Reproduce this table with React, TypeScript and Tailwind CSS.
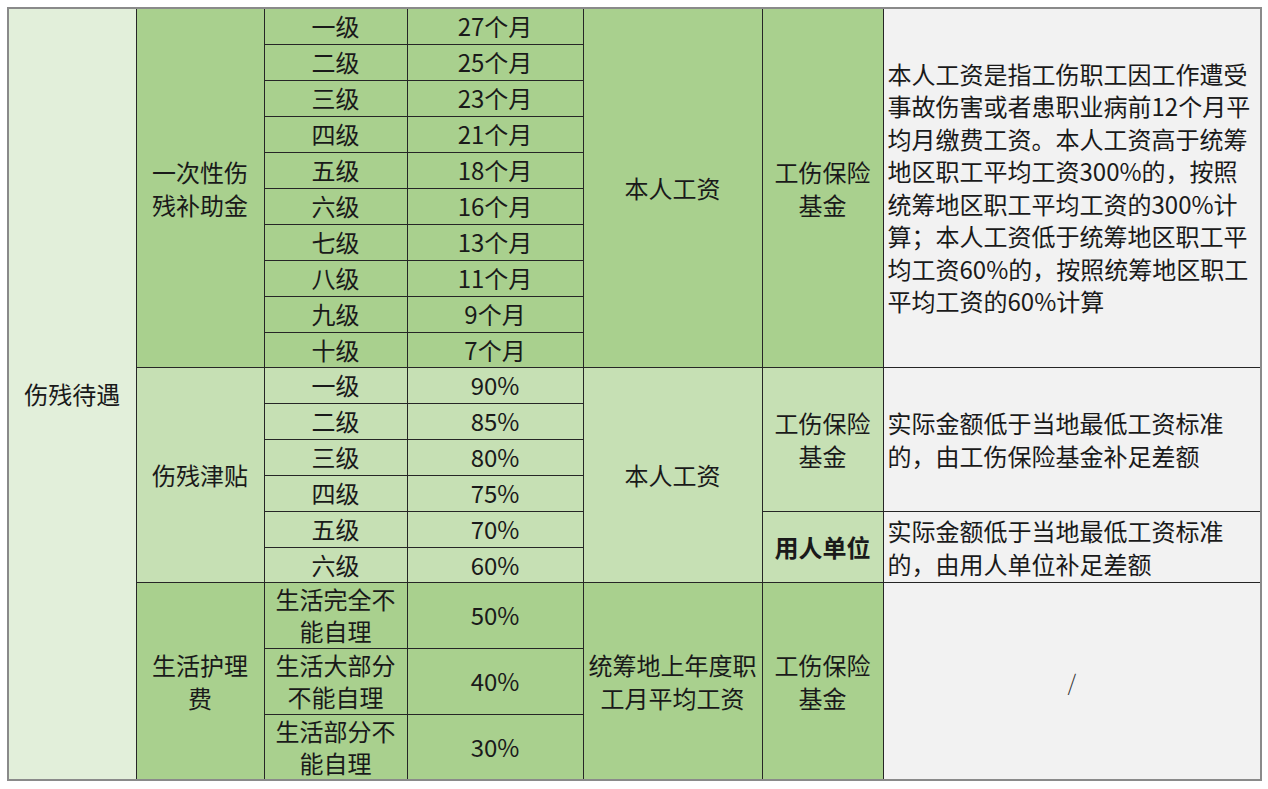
import React from 'react';

const dark = 'bg-[#a9d08e]';
const light = 'bg-[#c6e0b4]';
const cell = 'border border-[#262626] text-center align-middle p-0';
const note = 'border border-[#262626] bg-[#f2f2f2] text-left align-middle py-0 pl-[4px] pr-1';

const lumpSum = [
  ['一级', '27个月'],
  ['二级', '25个月'],
  ['三级', '23个月'],
  ['四级', '21个月'],
  ['五级', '18个月'],
  ['六级', '16个月'],
  ['七级', '13个月'],
  ['八级', '11个月'],
  ['九级', '9个月'],
  ['十级', '7个月'],
];

const allowance = [
  ['一级', '90%'],
  ['二级', '85%'],
  ['三级', '80%'],
  ['四级', '75%'],
  ['五级', '70%'],
  ['六级', '60%'],
];

const App: React.FC = () => {
  return (
    <div className="min-h-screen bg-white pl-[7px] pt-[7px] font-['Noto_Sans_CJK_SC',sans-serif] text-[24px] leading-[32px] text-[#1a1a1a]">
      <table className="table-fixed border-collapse border-2 border-[#8a8a8a] w-[1253px]">
        <colgroup>
          <col className="w-[128px]" />
          <col className="w-[128px]" />
          <col className="w-[143px]" />
          <col className="w-[176px]" />
          <col className="w-[179px]" />
          <col className="w-[121px]" />
          <col className="w-[378px]" />
        </colgroup>
        <tbody>
          {lumpSum.map(([level, months], i) => (
            <tr key={level} className={i === 9 ? 'h-[35px]' : 'h-[36px]'}>
              {i === 0 && (
                <td rowSpan={19} className={`${cell} bg-[#e2efda]`}>
                  伤残待遇
                </td>
              )}
              {i === 0 && (
                <td rowSpan={10} className={`${cell} ${dark} leading-[33px]`}>
                  一次性伤
                  <br />
                  残补助金
                </td>
              )}
              <td className={`${cell} ${dark}`}>{level}</td>
              <td className={`${cell} ${dark}`}>{months}</td>
              {i === 0 && (
                <>
                  <td rowSpan={10} className={`${cell} ${dark}`}>
                    本人工资
                  </td>
                  <td rowSpan={10} className={`${cell} ${dark} leading-[33px]`}>
                    工伤保险
                    <br />
                    基金
                  </td>
                  <td rowSpan={10} className={`${note} leading-[32.5px]`}>
                    本人工资是指工伤职工因工作遭受
                    <br />
                    事故伤害或者患职业病前12个月平
                    <br />
                    均月缴费工资。本人工资高于统筹
                    <br />
                    地区职工平均工资300%的，按照
                    <br />
                    统筹地区职工平均工资的300%计
                    <br />
                    算；本人工资低于统筹地区职工平
                    <br />
                    均工资60%的，按照统筹地区职工
                    <br />
                    平均工资的60%计算
                  </td>
                </>
              )}
            </tr>
          ))}

          {allowance.map(([level, pct], i) => (
            <tr key={'a' + level} className={i === 5 ? 'h-[35px]' : 'h-[36px]'}>
              {i === 0 && (
                <td rowSpan={6} className={`${cell} ${light}`}>
                  伤残津贴
                </td>
              )}
              <td className={`${cell} ${light}`}>{level}</td>
              <td className={`${cell} ${light}`}>{pct}</td>
              {i === 0 && (
                <>
                  <td rowSpan={6} className={`${cell} ${light}`}>
                    本人工资
                  </td>
                  <td rowSpan={4} className={`${cell} ${light} leading-[33px]`}>
                    工伤保险
                    <br />
                    基金
                  </td>
                  <td rowSpan={4} className={`${note} leading-[33px]`}>
                    实际金额低于当地最低工资标准
                    <br />
                    的，由工伤保险基金补足差额
                  </td>
                </>
              )}
              {i === 4 && (
                <>
                  <td rowSpan={2} className={`${cell} ${light} font-bold`}>
                    用人单位
                  </td>
                  <td rowSpan={2} className={`${note} leading-[33px]`}>
                    实际金额低于当地最低工资标准
                    <br />
                    的，由用人单位补足差额
                  </td>
                </>
              )}
            </tr>
          ))}

          <tr className="h-[66px]">
            <td rowSpan={3} className={`${cell} ${dark} leading-[33px]`}>
              生活护理
              <br />
              费
            </td>
            <td className={`${cell} ${dark}`}>
              生活完全不
              <br />
              能自理
            </td>
            <td className={`${cell} ${dark}`}>50%</td>
            <td rowSpan={3} className={`${cell} ${dark} leading-[33px]`}>
              统筹地上年度职
              <br />
              工月平均工资
            </td>
            <td rowSpan={3} className={`${cell} ${dark} leading-[33px]`}>
              工伤保险
              <br />
              基金
            </td>
            <td rowSpan={3} className={`${cell} bg-[#f2f2f2] text-[22px] font-light text-[#333]`}>
              /
            </td>
          </tr>
          <tr className="h-[66px]">
            <td className={`${cell} ${dark}`}>
              生活大部分
              <br />
              不能自理
            </td>
            <td className={`${cell} ${dark}`}>40%</td>
          </tr>
          <tr className="h-[65px]">
            <td className={`${cell} ${dark}`}>
              生活部分不
              <br />
              能自理
            </td>
            <td className={`${cell} ${dark}`}>30%</td>
          </tr>
        </tbody>
      </table>
    </div>
  );
};

export default App;
